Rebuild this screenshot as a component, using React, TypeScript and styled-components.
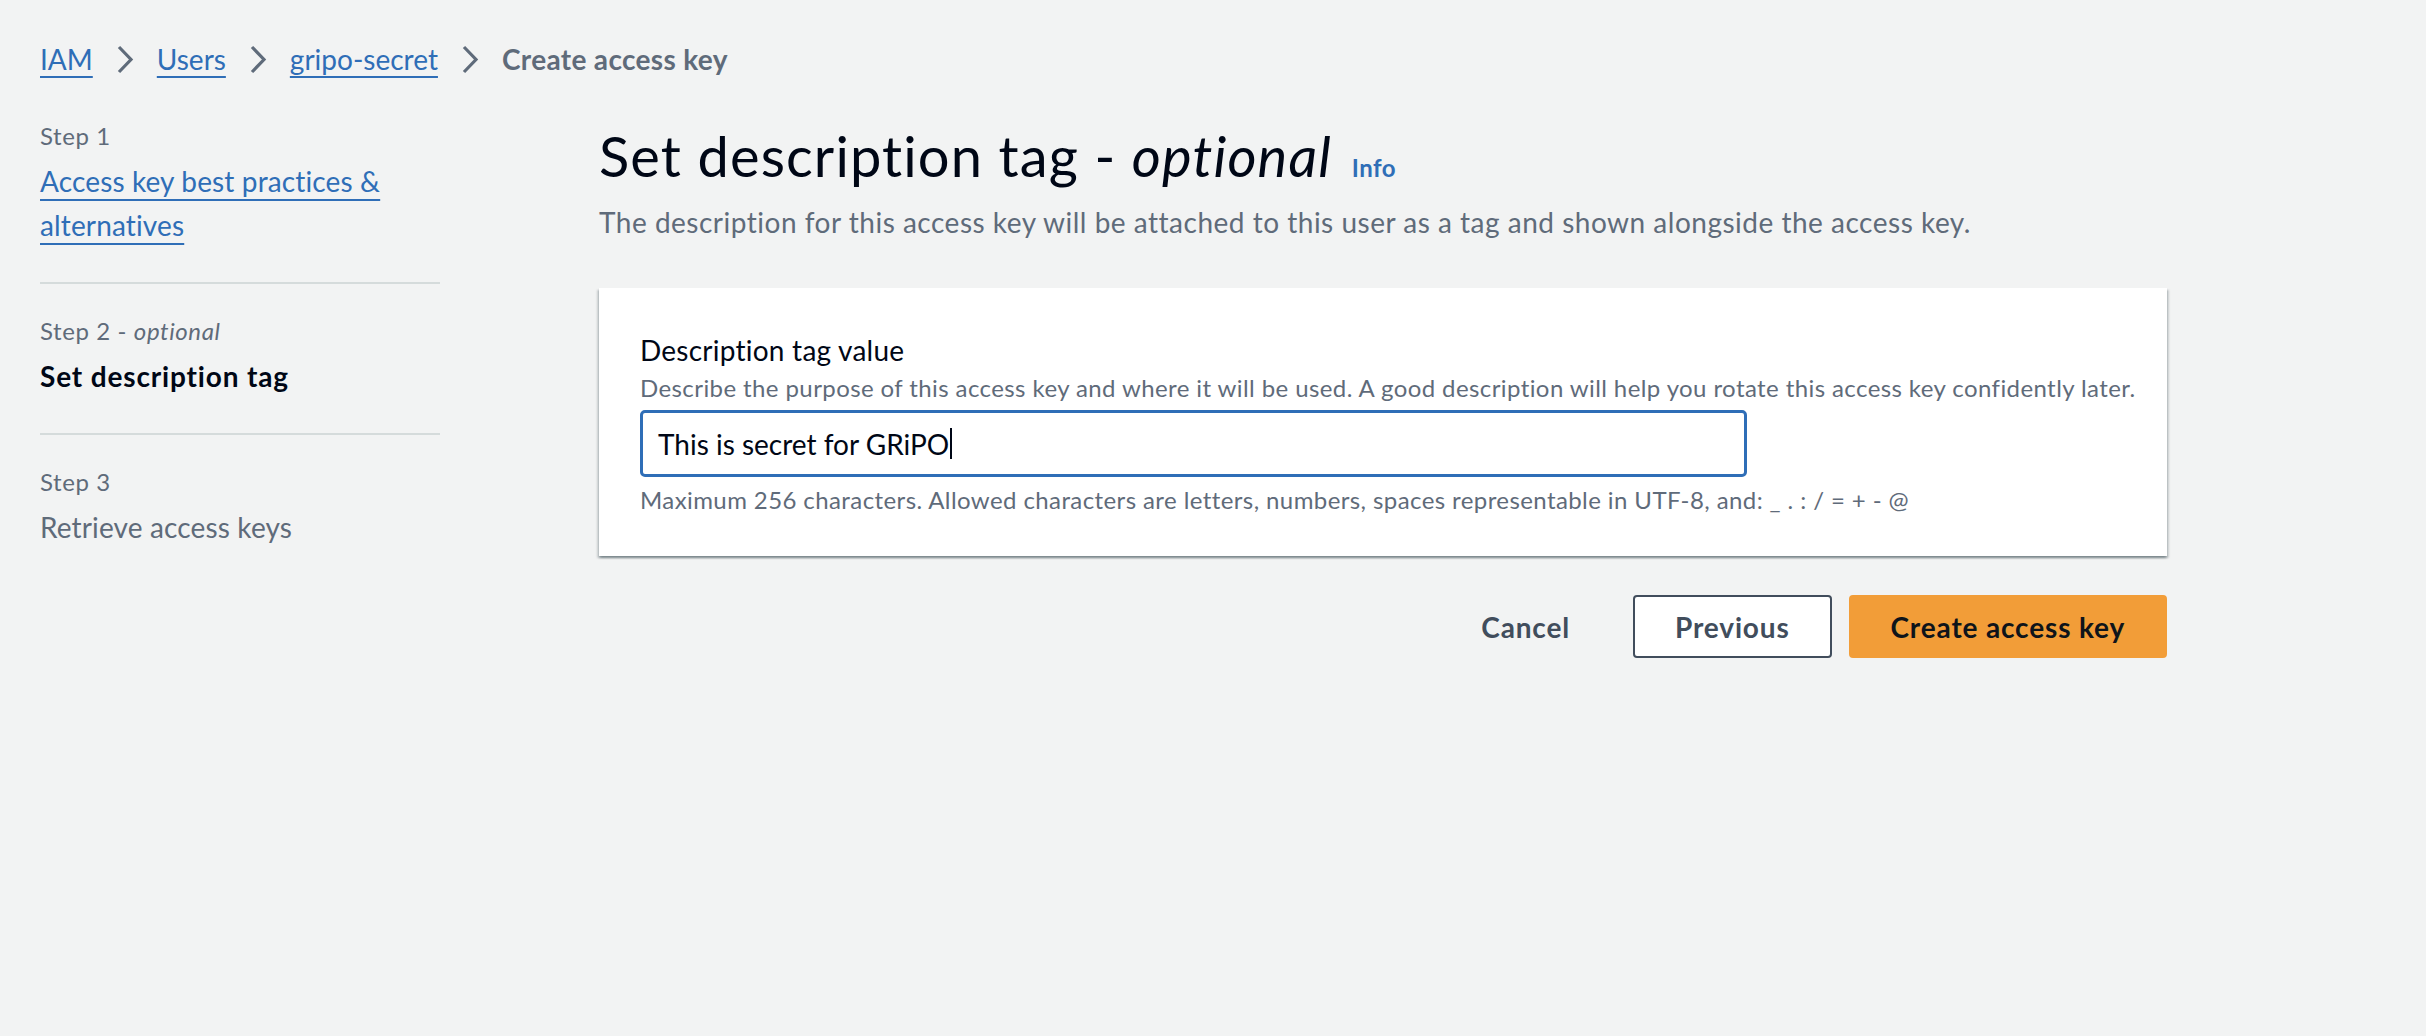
import styled, { createGlobalStyle } from "styled-components"

const GlobalStyle = createGlobalStyle`
  body {
    margin: 0;
    background: #f2f3f3;
    font-family: Lato, "Noto Sans", sans-serif;
    letter-spacing: 0.015em;
    color: #000716;
  }
`

const Page = styled.div`
  padding: 37px 0 0 40px;
  min-height: 1036px;
  box-sizing: border-box;
`

const Breadcrumbs = styled.nav`
  display: flex;
  align-items: center;
  gap: 23px;
  height: 44px;
  font-size: 28px;
  line-height: 44px;
`

const Crumb = styled.a`
  color: #2f6eb7;
  letter-spacing: 0;
  text-decoration: underline;
  text-decoration-thickness: 2px;
  text-underline-offset: 6px;
  cursor: pointer;
`

const Current = styled.span`
  color: #5f6b7a;
  font-weight: 700;
  letter-spacing: 0.012em;
`

const Layout = styled.div`
  display: flex;
  align-items: flex-start;
  margin-top: 39px;
`

const Steps = styled.ol`
  list-style: none;
  margin: 0;
  padding: 0;
  width: 400px;
  flex: none;
`

const Step = styled.li`
  padding: 31px 0 35px;
  border-bottom: 2px solid #d5dbdb;
  &:first-child {
    padding-top: 0;
  }
  &:last-child {
    border-bottom: none;
  }
`

const StepLabel = styled.div`
  font-size: 24px;
  line-height: 32px;
  letter-spacing: 0.025em;
  color: #5f6b7a;
  margin-bottom: 7px;
`

const StepTitle = styled.div<{ $state: "link" | "active" | "disabled" }>`
  font-size: 28px;
  line-height: 44px;
  font-weight: ${(p) => (p.$state === "active" ? 700 : 400)};
  letter-spacing: ${(p) => (p.$state === "active" ? "0.03em" : "0.005em")};
  color: ${(p) =>
    p.$state === "link" ? "#2f6eb7" : p.$state === "active" ? "#000716" : "#5f6b7a"};
  text-decoration: ${(p) => (p.$state === "link" ? "underline" : "none")};
  text-decoration-thickness: 2px;
  text-underline-offset: 7px;
`

const Main = styled.main`
  width: 1568px;
  margin-left: 159px;
`

const Heading = styled.h1`
  margin: 0;
  font-size: 56px;
  line-height: 72px;
  font-weight: 400;
  letter-spacing: 0.02em;
  color: #000716;
`

const InfoLink = styled.a`
  font-size: 24px;
  line-height: 1;
  font-weight: 700;
  letter-spacing: 0.02em;
  color: #2f6eb7;
  margin-left: 20px;
`

const Lead = styled.p`
  margin: 8px 0 0;
  font-size: 28px;
  line-height: 44px;
  letter-spacing: 0.018em;
  color: #5f6b7a;
`

const Card = styled.section`
  margin-top: 44px;
  background: #fff;
  padding: 40px 40px 40px 41px;
  box-shadow: 0 2px 2px rgba(0, 28, 36, 0.3), 2px 2px 2px rgba(0, 28, 36, 0.15),
    -2px 2px 2px rgba(0, 28, 36, 0.15);
`

const FieldLabel = styled.div`
  font-size: 28px;
  line-height: 44px;
  color: #000716;
`

const FieldHelp = styled.div<{ $gap: number }>`
  font-size: 24px;
  line-height: 32px;
  letter-spacing: 0.017em;
  white-space: nowrap;
  color: #5f6b7a;
  margin-top: ${(p) => p.$gap}px;
`

const Input = styled.div`
  margin-top: 6px;
  width: 1107px;
  height: 67px;
  box-sizing: border-box;
  border: 3px solid #2f6eb7;
  border-radius: 5px;
  padding: 0 15px;
  display: flex;
  align-items: center;
  font-size: 28px;
  letter-spacing: 0;
  color: #000716;
  background: #fff;
`

const Caret = styled.span`
  display: inline-block;
  width: 2px;
  height: 31px;
  margin-left: 1px;
  background: #000716;
`

const Actions = styled.div`
  display: flex;
  justify-content: flex-end;
  align-items: center;
  gap: 17px;
  margin-top: 39px;
`

const Button = styled.button<{ $variant: "link" | "normal" | "primary" }>`
  height: 63px;
  box-sizing: border-box;
  padding: 0 ${(p) => (p.$variant === "link" ? 44 : 40)}px;
  border-radius: 4px;
  font-family: inherit;
  font-size: 28px;
  font-weight: 700;
  letter-spacing: 0.03em;
  cursor: pointer;
  border: 2px solid
    ${(p) => (p.$variant === "normal" ? "#414d5c" : p.$variant === "primary" ? "#f29d38" : "transparent")};
  background: ${(p) => (p.$variant === "primary" ? "#f29d38" : p.$variant === "normal" ? "#fff" : "transparent")};
  color: ${(p) => (p.$variant === "primary" ? "#0f141a" : "#414d5c")};
`

const Chevron = () => (
  <svg width="18" height="29" viewBox="0 0 18 29" fill="none">
    <path d="M3 2l12 12.5L3 27" stroke="#5f6b7a" strokeWidth="3.2" />
  </svg>
)

const App = () => {
  return (
    <Page>
      <GlobalStyle />
      <Breadcrumbs>
        <Crumb>IAM</Crumb>
        <Chevron />
        <Crumb>Users</Crumb>
        <Chevron />
        <Crumb>gripo-secret</Crumb>
        <Chevron />
        <Current>Create access key</Current>
      </Breadcrumbs>
      <Layout>
        <Steps>
          <Step>
            <StepLabel>Step 1</StepLabel>
            <StepTitle $state="link">Access key best practices &amp; alternatives</StepTitle>
          </Step>
          <Step>
            <StepLabel>
              Step 2 - <i>optional</i>
            </StepLabel>
            <StepTitle $state="active">Set description tag</StepTitle>
          </Step>
          <Step>
            <StepLabel>Step 3</StepLabel>
            <StepTitle $state="disabled">Retrieve access keys</StepTitle>
          </Step>
        </Steps>
        <Main>
          <Heading>
            Set description tag - <i>optional</i>
            <InfoLink>Info</InfoLink>
          </Heading>
          <Lead>
            The description for this access key will be attached to this user as a tag and shown alongside the access key.
          </Lead>
          <Card>
            <FieldLabel>Description tag value</FieldLabel>
            <FieldHelp $gap={0}>
              Describe the purpose of this access key and where it will be used. A good description will help you rotate this access key confidently later.
            </FieldHelp>
            <Input>
              This is secret for GRiPO
              <Caret />
            </Input>
            <FieldHelp $gap={7}>
              Maximum 256 characters. Allowed characters are letters, numbers, spaces representable in UTF-8, and: _ . : / = + - @
            </FieldHelp>
          </Card>
          <Actions>
            <Button $variant="link">Cancel</Button>
            <Button $variant="normal">Previous</Button>
            <Button $variant="primary">Create access key</Button>
          </Actions>
        </Main>
      </Layout>
    </Page>
  )
}

export default App
